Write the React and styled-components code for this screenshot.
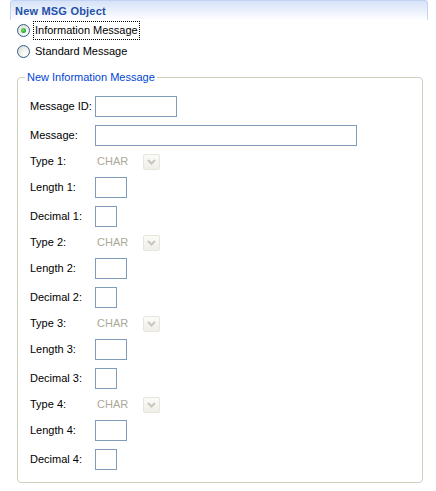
import React from "react";
import styled, { createGlobalStyle } from "styled-components";

const Global = createGlobalStyle`
  html, body { margin: 0; padding: 0; background: #ffffff; }
  body { font-family: "Liberation Sans", Arial, sans-serif; font-size: 11px; color: #000; }
`;

const Page = styled.div`
  width: 436px;
  height: 491px;
  display: flex;
  flex-direction: column;
`;

const Header = styled.div`
  margin-left: 10px;
  width: 418px;
  height: 20px;
  box-sizing: border-box;
  border: 1px solid #c3d3f3;
  border-bottom: none;
  border-radius: 3px 3px 0 0;
  background: linear-gradient(#d6e2f8 0%, #eef3fc 60%, #ffffff 100%);
  display: flex;
  align-items: center;
  padding-left: 4px;
`;

const Title = styled.span`
  font-weight: bold;
  font-size: 11px;
  color: #2550a8;
  letter-spacing: 0.2px;
`;

const RadioList = styled.div`
  display: flex;
  flex-direction: column;
  padding-left: 17px;
  gap: 1px;
`;

const RadioRow = styled.label`
  display: flex;
  align-items: center;
  height: 20px;
  gap: 3px;
`;

const RadioCircle = styled.span`
  width: 11px;
  height: 11px;
  border-radius: 50%;
  border: 1px solid #2f5f8c;
  background: radial-gradient(circle at 65% 70%, #ffffff 0%, #f2f2ee 40%, #d6d4c8 100%);
  display: flex;
  align-items: center;
  justify-content: center;
  flex: none;
`;

const RadioDot = styled.span`
  width: 5px;
  height: 5px;
  border-radius: 50%;
  background: radial-gradient(circle at 40% 40%, #7ee07e, #21a121 70%);
`;

const RadioText = styled.span`
  padding: 2px 1px;
  border: 1px dotted ${(p) => (p.$focused ? "#000" : "transparent")};
  line-height: 13px;
`;

const Group = styled.fieldset`
  margin: 10px 0 0 17px;
  width: 406px;
  height: 412px;
  box-sizing: border-box;
  border: 1px solid #d0d0bf;
  border-radius: 4px;
  padding: 12px 0 0 12px;
`;

const Legend = styled.legend`
  color: #0046d5;
  padding: 0 2px;
  margin-left: -5px;
  line-height: 13px;
  font-size: 11px;
`;

const Form = styled.div`
  display: grid;
  grid-template-columns: 65px 1fr;
  row-gap: 8px;
  align-items: center;
`;

const Label = styled.span`
  line-height: 13px;
`;

const TextBox = styled.div`
  width: ${(p) => p.$w}px;
  height: 21px;
  box-sizing: border-box;
  border: 1px solid #7f9db9;
  background: #fff;
`;

const Combo = styled.div`
  display: flex;
  align-items: center;
  height: 15px;
  padding-left: 2px;
`;

const ComboText = styled.span`
  width: 46px;
  color: #aca899;
  line-height: 13px;
`;

const ComboButton = styled.div`
  width: 17px;
  height: 16px;
  box-sizing: border-box;
  border: 1px solid #e8e6dc;
  background: linear-gradient(#fbfbf8, #efeee8);
  border-radius: 2px;
  display: flex;
  align-items: center;
  justify-content: center;
`;

const Chevron = () => (
  <svg width="9" height="6" viewBox="0 0 9 6">
    <path d="M1 1 L4.5 4.5 L8 1" fill="none" stroke="#c9c7bb" strokeWidth="2" />
  </svg>
);

const types = [1, 2, 3, 4];

export default function App() {
  return (
    <Page>
      <Global />
      <Header>
        <Title>New MSG Object</Title>
      </Header>
      <RadioList>
        <RadioRow>
          <RadioCircle>
            <RadioDot />
          </RadioCircle>
          <RadioText $focused>Information Message</RadioText>
        </RadioRow>
        <RadioRow>
          <RadioCircle />
          <RadioText>Standard Message</RadioText>
        </RadioRow>
      </RadioList>
      <Group>
        <Legend>New Information Message</Legend>
        <Form>
          <Label>Message ID:</Label>
          <TextBox $w={82} />
          <Label>Message:</Label>
          <TextBox $w={262} />
          {types.map((n) => (
            <React.Fragment key={n}>
              <Label>Type {n}:</Label>
              <Combo>
                <ComboText>CHAR</ComboText>
                <ComboButton>
                  <Chevron />
                </ComboButton>
              </Combo>
              <Label>Length {n}:</Label>
              <TextBox $w={32} />
              <Label>Decimal {n}:</Label>
              <TextBox $w={22} />
            </React.Fragment>
          ))}
        </Form>
      </Group>
    </Page>
  );
}
